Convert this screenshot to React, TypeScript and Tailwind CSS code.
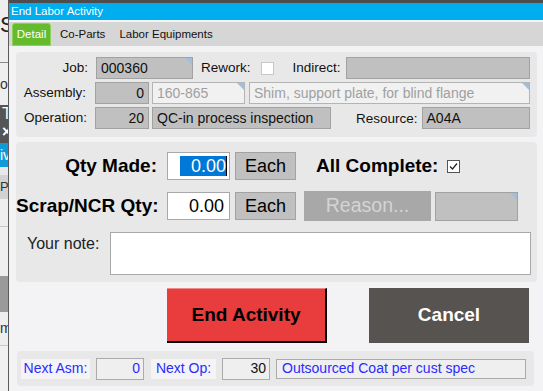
import React from "react";

const Tri = () => (
  <span className="absolute top-0 right-0 w-0 h-0 border-l-[7px] border-l-transparent border-t-[7px] border-t-[#a3bedc]" />
);

const GrayField = ({ w, text, right, tri, cls = "" }: { w?: string; text?: string; right?: boolean; tri?: boolean; cls?: string }) => (
  <div className={`relative h-[22px] bg-[#c0c0c0] border border-[#a2a2a2] flex items-center text-[14px] text-[#111] px-[4px] ${right ? "justify-end" : ""} ${w ?? ""} ${cls}`}>
    {text}
    {tri && <Tri />}
  </div>
);

const LightField = ({ w, text, tri, cls = "" }: { w?: string; text?: string; tri?: boolean; cls?: string }) => (
  <div className={`relative h-[22px] bg-[#f1f1f1] border border-[#b4b4b4] flex items-center text-[14px] text-[#a0a0a0] px-[4px] whitespace-nowrap overflow-hidden ${w ?? ""} ${cls}`}>
    {text}
    {tri && <Tri />}
  </div>
);

export default function App() {
  return (
    <div className="w-[543px] h-[391px] flex overflow-hidden bg-[#f3f3f5] font-['Liberation_Sans',Arial,sans-serif]">
      {/* background app strip */}
      <div className="w-[8px] shrink-0 flex flex-col overflow-hidden text-[#222] bg-[#f0f0f0]">
        <div className="h-[63px] bg-[#eeeeee] border-b border-[#8a8a8a] pt-[14px] text-[22px] leading-[22px]">S</div>
        <div className="h-[42px] bg-[#efefef] flex items-center text-[14px] text-[#333]">or</div>
        <div className="h-[38px] bg-[#555555] flex flex-col text-white text-[16px] leading-[18px] pl-[2px]">
          <span>T</span>
          <span className="font-bold">×</span>
        </div>
        <div className="h-[24px] bg-[#109bd8] text-white text-[14px] flex items-center">iv</div>
        <div className="h-[8px] bg-[#e8e8e8]" />
        <div className="h-[24px] bg-[#d2d2d2] text-[13px] flex items-center text-[#333]">Pa</div>
        <div className="h-[28px] bg-[#eeeeee] border-b border-[#c8c8c8]" />
        <div className="h-[49px] bg-[#efefef]" />
        <div className="h-[36px] bg-[#9a9a9a]" />
        <div className="h-[34px] bg-[#eeeeee] border-b border-[#c8c8c8] flex items-center text-[14px] text-[#333]">m</div>
        <div className="flex-1 bg-[#f0f0f0]" />
      </div>

      {/* window */}
      <div className="flex-1 flex flex-col border-l border-[#5b5b5b]">
        <div className="h-[3px] bg-[#4d4d4d]" />
        <div className="h-[17px] bg-[#00adef] text-white text-[11.5px] flex items-center pl-[2px]">End Labor Activity</div>
        <div className="h-[2px] bg-[#f4f4f4]" />
        <div className="h-[24px] bg-[#d6d6d6] flex items-end pl-[3px] text-[11.5px] text-[#111]">
          <div className="h-[23px] w-[39px] rounded-t-[3px] border border-[#8cd25a] bg-[#64bb2c] text-white flex items-center justify-center">Detail</div>
          <div className="h-[23px] flex items-center ml-[9px]">Co-Parts</div>
          <div className="h-[23px] flex items-center ml-[14px]">Labor Equipments</div>
        </div>

        <div className="flex-1 flex flex-col pl-[7px] pr-[6px] pt-[6px]">
          {/* panel 1 */}
          <div className="h-[85px] bg-[#e8e8e8] rounded-[4px] flex flex-col pt-[5px] gap-[3px] text-[13.5px] text-[#111]">
            <div className="flex items-center h-[22px]">
              <div className="w-[72px] text-right">Job:</div>
              <GrayField w="w-[97px]" text="000360" tri cls="ml-[8px]" />
              <div className="ml-[8px]">Rework:</div>
              <div className="ml-[10px] w-[13px] h-[13px] bg-white border border-[#c8c8c8]" />
              <div className="ml-[19px]">Indirect:</div>
              <GrayField cls="ml-[5px] flex-1 mr-[7px]" />
            </div>
            <div className="flex items-center h-[22px]">
              <div className="w-[70px] text-right">Assembly:</div>
              <GrayField w="w-[54px]" text="0" right cls="ml-[9px]" />
              <LightField w="w-[93px]" text="160-865" tri cls="ml-[3px]" />
              <LightField text="Shim, support plate, for blind flange" tri cls="ml-[4px] flex-1 mr-[7px]" />
            </div>
            <div className="flex items-center h-[22px]">
              <div className="w-[71px] text-right">Operation:</div>
              <GrayField w="w-[54px]" text="20" right cls="ml-[8px]" />
              <GrayField w="w-[179px]" text="QC-in process inspection" cls="ml-[3px]" />
              <div className="ml-[25px] mt-[3px]">Resource:</div>
              <GrayField text="A04A" cls="ml-[4px] flex-1 mr-[7px]" />
            </div>
          </div>

          {/* panel 2 */}
          <div className="mt-[5px] h-[140px] bg-[#e8e8e8] rounded-[4px] flex flex-col pt-[10px] text-[#000]">
            <div className="flex items-center h-[28px]">
              <div className="w-[141px] text-right font-bold text-[19px] whitespace-nowrap">Qty Made:</div>
              <div className="ml-[10px] w-[63px] h-[28px] bg-white border border-[#a8a8a8] flex items-center justify-end pr-[2px] text-[18px]">
                <span className="bg-[#0078d7] text-white pl-[11px] leading-[20px]">0.00</span>
                <span className="w-[1px] h-[20px] bg-black" />
              </div>
              <div className="ml-[5px] w-[61px] h-[28px] bg-[#c0c0c0] border border-[#a2a2a2] flex items-center justify-center text-[18px]">Each</div>
              <div className="ml-[20px] font-bold text-[19px] whitespace-nowrap">All Complete:</div>
              <div className="ml-[9px] w-[13px] h-[13px] bg-white border border-[#555] flex items-center justify-center">
                <svg width="9" height="9" viewBox="0 0 9 9"><path d="M1 4.5 L3.5 7 L8 1.5" fill="none" stroke="#222" strokeWidth="1.2" /></svg>
              </div>
            </div>
            <div className="flex items-center h-[30px] mt-[11px]">
              <div className="w-[141px] text-right font-bold text-[19px] whitespace-nowrap">Scrap/NCR Qty:</div>
              <div className="ml-[10px] w-[63px] h-[28px] bg-white border border-[#a8a8a8] flex items-center justify-end pr-[5px] text-[18px]">0.00</div>
              <div className="ml-[5px] w-[61px] h-[28px] bg-[#c0c0c0] border border-[#a2a2a2] flex items-center justify-center text-[18px]">Each</div>
              <div className="ml-[8px] w-[127px] h-[30px] bg-[#a8a8a8] flex items-center justify-center text-[19.5px] text-[#d4d4d4]">Reason...</div>
              <div className="relative ml-[4px] w-[83px] h-[29px] bg-[#c0c0c0] border border-[#a2a2a2]"><Tri /></div>
            </div>
            <div className="flex items-start mt-[11px]">
              <div className="ml-[11px] w-[83px] text-[16px] text-[#222]">Your note:</div>
              <div className="w-[421px] h-[43px] bg-white border border-[#a8a8a8]" />
            </div>
          </div>

          {/* buttons */}
          <div className="flex mt-[6px] h-[55px]">
            <div className="ml-[151px] w-[160px] h-[55px] bg-[#e83c3d] border-t border-t-[#f08a8a] border-r-2 border-b-2 border-r-black border-b-black flex items-center justify-center font-bold text-[19px] text-black">End Activity</div>
            <div className="ml-[42px] w-[160px] h-[55px] bg-[#565350] flex items-center justify-center font-bold text-[19px] text-white">Cancel</div>
          </div>

          {/* bottom panel */}
          <div className="mt-[8px] ml-[1px] mr-[3px] h-[35px] bg-[#e8e8e8] rounded-[4px] flex items-center pl-[4px] text-[14px] text-[#2b2bff]">
            <div className="w-[69px] h-[20px] bg-[#f4f4f7] flex items-center justify-center">Next Asm:</div>
            <div className="ml-[6px] w-[48px] h-[22px] bg-[#efefef] border border-[#ababab] flex items-center justify-end pr-[3px]">0</div>
            <div className="ml-[7px] w-[65px] h-[20px] bg-[#f4f4f7] flex items-center justify-center">Next Op:</div>
            <div className="ml-[6px] w-[48px] h-[22px] bg-[#efefef] border border-[#ababab] flex items-center justify-end pr-[3px] text-[#111]">30</div>
            <div className="ml-[6px] w-[250px] h-[20px] bg-[#efefef] border border-[#ababab] flex items-center pl-[5px]">Outsourced Coat per cust spec</div>
          </div>
        </div>
      </div>
    </div>
  );
}
